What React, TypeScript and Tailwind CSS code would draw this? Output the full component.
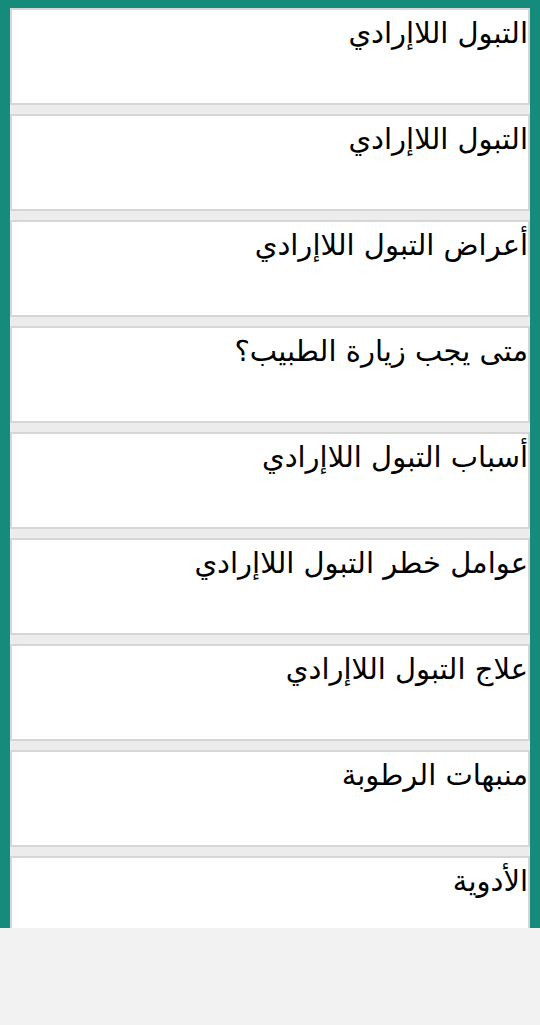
const items = [
  'التبول اللاإرادي',
  'التبول اللاإرادي',
  'أعراض التبول اللاإرادي',
  'متى يجب زيارة الطبيب؟',
  'أسباب التبول اللاإرادي',
  'عوامل خطر التبول اللاإرادي',
  'علاج التبول اللاإرادي',
  'منبهات الرطوبة',
  'الأدوية',
]

export default function App() {
  return (
    <div className="w-[540px] h-[1025px] bg-[#f2f2f2] overflow-hidden" style={{ fontFamily: '"DejaVu Sans", sans-serif' }}>
      <div className="h-[928px] overflow-hidden bg-[#148b7b] pt-[8px] px-[10px]">
        <div dir="rtl" className="bg-[#ececec] flex flex-col gap-[9px]">
          {items.map((t, i) => (
            <div
              key={i}
              className="h-[97px] shrink-0 bg-white border-2 border-[#d6d6d6] text-[29px] leading-[46px] text-black text-right"
            >
              {t}
            </div>
          ))}
        </div>
      </div>
    </div>
  )
}
